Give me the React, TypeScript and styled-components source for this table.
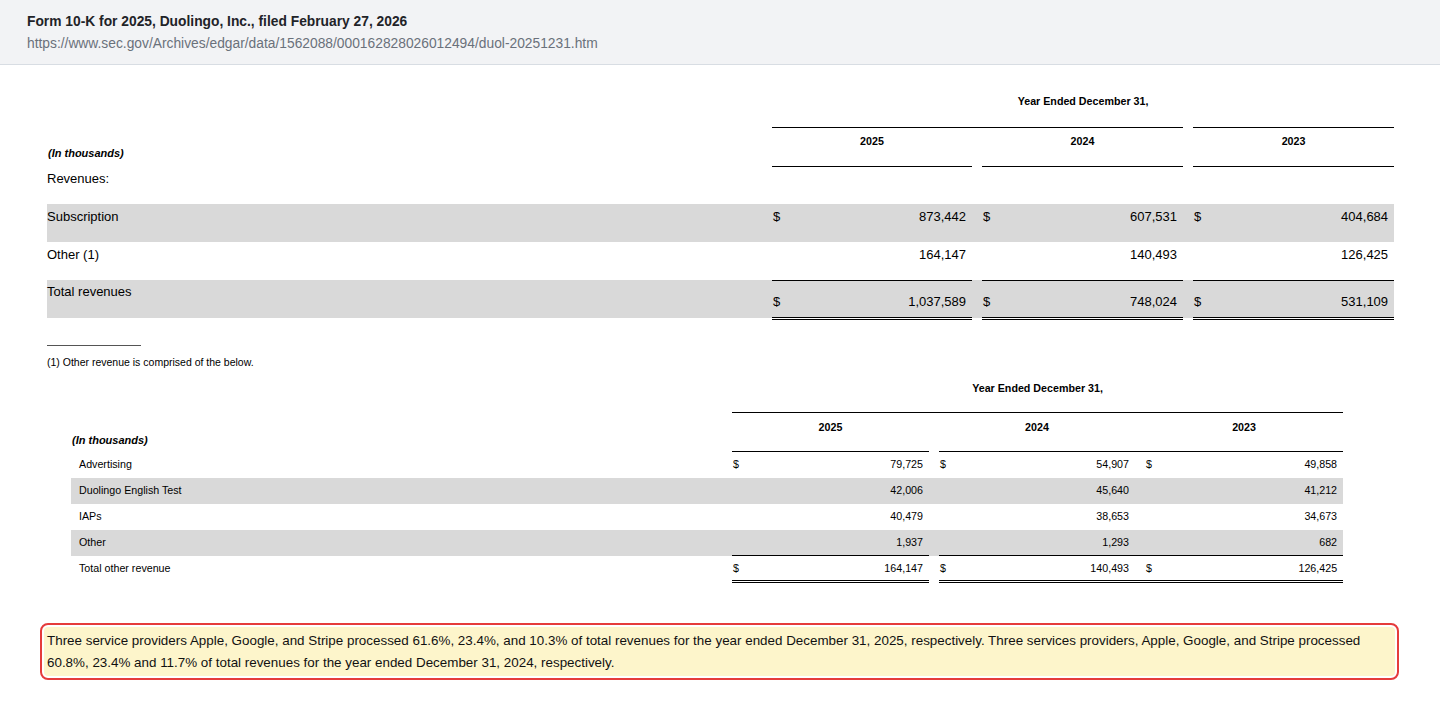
import React from "react";
import styled, { createGlobalStyle, css } from "styled-components";

const GlobalStyle = createGlobalStyle`
  html, body {
    margin: 0;
    padding: 0;
    background: #ffffff;
  }
  body {
    font-family: "Liberation Sans", Arial, Helvetica, sans-serif;
    color: #000;
  }
`;

type Line = "single" | "double";

type DataRow = {
  label: string;
  values: string[];
  dollar?: boolean;
  shaded?: boolean;
  total?: boolean;
  plain?: boolean;
};

type TableSpec = {
  small?: boolean;
  widths: number[];
  topJoin: boolean[]; // which gap cells carry the top rule of the year row
  lineJoin: boolean[]; // which gap cells carry the other rules
  rows: DataRow[];
};

const Header = styled.header`
  background: #f2f3f5;
  border-bottom: 1px solid #d8dde3;
  padding: 12px 27px 10px;
`;

const Title = styled.div`
  font-size: 13.8px;
  font-weight: 700;
  line-height: 20px;
  color: #1f2328;
`;

const Url = styled.div`
  margin-top: 2px;
  font-size: 13.8px;
  line-height: 20px;
  color: #6a717b;
`;

const Content = styled.main`
  padding: 20px 46px 0 47px;
`;

const Table = styled.table<{ $small?: boolean; $width: number }>`
  border-collapse: collapse;
  border-spacing: 0;
  table-layout: fixed;
  width: ${({ $width }) => $width}px;
  margin-left: ${({ $small }) => ($small ? "24px" : "0")};
  margin-top: ${({ $small }) => ($small ? "8px" : "0")};
  font-size: ${({ $small }) => ($small ? "10.7px" : "13px")};
  line-height: ${({ $small }) => ($small ? "13px" : "16px")};
`;

const Col = styled.col<{ $w: number }>`
  width: ${({ $w }) => $w}px;
`;

const Row = styled.tr<{ $shaded?: boolean; $h: number }>`
  height: ${({ $h }) => $h}px;
  background: ${({ $shaded }) => ($shaded ? "#d9d9d9" : "transparent")};
`;

const Cell = styled.td<{
  $small?: boolean;
  $top?: Line | false;
  $bottom?: Line | false;
}>`
  padding: 0;
  vertical-align: ${({ $small }) => ($small ? "middle" : "top")};
  ${({ $top }) => $top && css`border-top: 1px solid #000;`}
  ${({ $bottom }) =>
    $bottom === "double"
      ? css`border-bottom: 3px double #000;`
      : $bottom === "single"
      ? css`border-bottom: 1px solid #000;`
      : ""}
`;

const CaptionCell = styled(Cell)`
  text-align: center;
  font-weight: 700;
  font-size: 10.7px;
  line-height: 13px;
  vertical-align: top;
  padding-top: ${({ $small }) => ($small ? "6px" : "10px")};
`;

const YearCell = styled(Cell)`
  text-align: center;
  font-weight: 700;
  font-size: 10.7px;
  line-height: 13px;
  vertical-align: top;
  padding-top: ${({ $small }) => ($small ? "8px" : "7px")};
`;

const UnitCell = styled(Cell)`
  font-weight: 700;
  font-style: italic;
  font-size: 11px;
  line-height: 13px;
  vertical-align: bottom;
  padding-left: 1px;
  padding-bottom: ${({ $small }) => ($small ? "5px" : "6px")};
`;

const LabelCell = styled(Cell)<{ $total?: boolean }>`
  padding-left: ${({ $small }) => ($small ? "8px" : "0")};
  padding-top: ${({ $small, $total }) => ($small ? "0" : $total ? "4px" : "5px")};
  white-space: nowrap;
`;

const DollarCell = styled(Cell)<{ $total?: boolean }>`
  padding-left: 1px;
  padding-top: ${({ $small, $total }) => ($small ? "0" : $total ? "13px" : "5px")};
`;

const NumCell = styled(Cell)<{ $total?: boolean }>`
  text-align: right;
  padding-right: 6px;
  padding-top: ${({ $small, $total }) => ($small ? "0" : $total ? "13px" : "5px")};
`;

const Rule = styled.div`
  width: 94px;
  margin-top: 25px;
  border-top: 1px solid #555;
`;

const Note = styled.p`
  margin: 10px 0 0;
  font-size: 10.5px;
  line-height: 12px;
`;

const HighlightWrap = styled.section`
  padding: 40px 41px 0 40px;
`;

const Highlight = styled.div`
  border: 2px solid #e53b3b;
  border-radius: 8px;
  padding: 2px;
  background: #fff;
`;

const HighlightText = styled.p`
  margin: 0;
  padding: 3px 3px 2px;
  background: #fdf5cb;
  border-radius: 4px;
  font-size: 13.4px;
  line-height: 22px;
  color: #111;
`;

const YEARS = ["2025", "2024", "2023"];

function FinTable({ spec }: { spec: TableSpec }) {
  const { small, widths, topJoin, lineJoin, rows } = spec;
  const total = widths.reduce((a, b) => a + b, 0);
  const rowH = small ? 26 : 38;

  const groupCells = (
    row: DataRow,
    idx: number,
    top: Line | false,
    bottom: Line | false
  ) => (
    <React.Fragment key={idx}>
      {idx > 0 && (
        <Cell
          $small={small}
          $top={lineJoin[idx - 1] ? top : false}
          $bottom={lineJoin[idx - 1] ? bottom : false}
        />
      )}
      <DollarCell $small={small} $total={row.total} $top={top} $bottom={bottom}>
        {row.dollar ? "$" : ""}
      </DollarCell>
      <NumCell $small={small} $total={row.total} $top={top} $bottom={bottom}>
        {row.values[idx]}
      </NumCell>
    </React.Fragment>
  );

  return (
    <Table $small={small} $width={total}>
      <colgroup>
        {widths.map((w, i) => (
          <Col key={i} $w={w} />
        ))}
      </colgroup>
      <tbody>
        <Row $h={small ? 37 : 42}>
          <Cell $small={small} />
          <CaptionCell $small={small} colSpan={8}>
            Year Ended December 31,
          </CaptionCell>
        </Row>
        <Row $h={39}>
          <UnitCell $small={small}>(In thousands)</UnitCell>
          {YEARS.map((y, i) => (
            <React.Fragment key={y}>
              {i > 0 && (
                <Cell
                  $small={small}
                  $top={topJoin[i - 1] ? "single" : false}
                  $bottom={lineJoin[i - 1] ? "single" : false}
                />
              )}
              <YearCell $small={small} colSpan={2} $top="single" $bottom="single">
                {y}
              </YearCell>
            </React.Fragment>
          ))}
        </Row>
        {rows.map((row) => {
          if (row.plain) {
            return (
              <Row key={row.label} $h={rowH}>
                <LabelCell $small={small}>{row.label}</LabelCell>
                <Cell $small={small} colSpan={8} />
              </Row>
            );
          }
          const top: Line | false = row.total ? "single" : false;
          const bottom: Line | false = row.total ? "double" : false;
          return (
            <Row key={row.label} $h={rowH} $shaded={row.shaded}>
              <LabelCell $small={small} $total={row.total}>
                {row.label}
              </LabelCell>
              {YEARS.map((_, i) => groupCells(row, i, top, bottom))}
            </Row>
          );
        })}
      </tbody>
    </Table>
  );
}

const revenueTable: TableSpec = {
  widths: [725, 20, 180, 10, 20, 181, 10, 20, 181],
  topJoin: [true, false],
  lineJoin: [false, false],
  rows: [
    { label: "Revenues:", values: [], plain: true },
    { label: "Subscription", values: ["873,442", "607,531", "404,684"], dollar: true, shaded: true },
    { label: "Other (1)", values: ["164,147", "140,493", "126,425"] },
    { label: "Total revenues", values: ["1,037,589", "748,024", "531,109"], dollar: true, shaded: true, total: true },
  ],
};

const otherTable: TableSpec = {
  small: true,
  widths: [661, 20, 177, 10, 20, 176, 10, 20, 178],
  topJoin: [true, true],
  lineJoin: [false, true],
  rows: [
    { label: "Advertising", values: ["79,725", "54,907", "49,858"], dollar: true },
    { label: "Duolingo English Test", values: ["42,006", "45,640", "41,212"], shaded: true },
    { label: "IAPs", values: ["40,479", "38,653", "34,673"] },
    { label: "Other", values: ["1,937", "1,293", "682"], shaded: true },
    { label: "Total other revenue", values: ["164,147", "140,493", "126,425"], dollar: true, total: true },
  ],
};

export default function App() {
  return (
    <>
      <GlobalStyle />
      <Header>
        <Title>Form 10-K for 2025, Duolingo, Inc., filed February 27, 2026</Title>
        <Url>https://www.sec.gov/Archives/edgar/data/1562088/000162828026012494/duol-20251231.htm</Url>
      </Header>
      <Content>
        <FinTable spec={revenueTable} />
        <Rule />
        <Note>(1) Other revenue is comprised of the below.</Note>
        <FinTable spec={otherTable} />
      </Content>
      <HighlightWrap>
        <Highlight>
          <HighlightText>
            Three service providers Apple, Google, and Stripe processed 61.6%, 23.4%, and 10.3% of total
            revenues for the year ended December 31, 2025, respectively. Three services providers, Apple,
            Google, and Stripe processed 60.8%, 23.4% and 11.7% of total revenues for the year ended December
            31, 2024, respectively.
          </HighlightText>
        </Highlight>
      </HighlightWrap>
    </>
  );
}
